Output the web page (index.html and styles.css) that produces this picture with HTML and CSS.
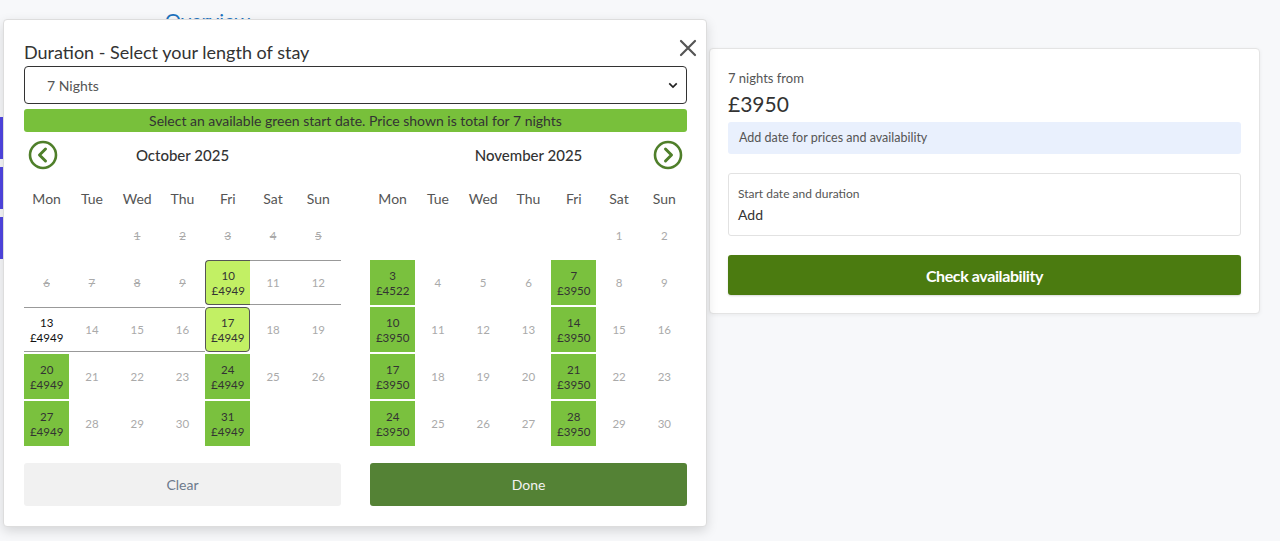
FILE: index.html
```html
<!DOCTYPE html>
<html lang="en">
<head>
    <meta charset="UTF-8">
    <meta name="viewport" content="width=device-width, initial-scale=1.0">
    <title>Holiday - Select dates</title>
    <link rel="stylesheet" href="styles.css">
</head>
<body>
    <div class="page">
        <section class="page-main">
            <nav class="tabs">
                <a href="#" class="tab-link">Overview</a>
            </nav>
            <div class="side-blocks">
                <div class="side-btn"></div>
                <div class="side-btn"></div>
                <div class="side-btn"></div>
            </div>
        </section>

        <aside class="booking-card">
            <div class="from-label">7 nights from</div>
            <div class="from-price">£3950</div>
            <div class="info-box">Add date for prices and availability</div>
            <div class="date-field">
                <div class="date-label">Start date and duration</div>
                <div class="date-value">Add</div>
            </div>
            <button class="check-btn">Check availability</button>
        </aside>
    </div>

    <div class="modal" role="dialog" aria-label="Select dates">
        <button class="close-btn" aria-label="Close">
            <svg viewBox="0 0 20 20" width="20" height="20">
                <path d="M3 3 L17 17 M17 3 L3 17" stroke="#555" stroke-width="2.2" stroke-linecap="round" fill="none"/>
            </svg>
        </button>
        <h2 class="modal-title">Duration - Select your length of stay</h2>
        <div class="select-box">
            <span>7 Nights</span>
            <svg class="select-chevron" viewBox="0 0 12 8" width="10" height="7">
                <path d="M1.5 1.5 L6 6 L10.5 1.5" stroke="#222" stroke-width="2" fill="none"/>
            </svg>
        </div>
        <div class="notice">Select an available green start date. Price shown is total for 7 nights</div>

        <div class="months">
            <div class="month">
                <div class="month-head">
                    <button class="nav-arrow" aria-label="Previous month">
                        <svg viewBox="0 0 30 30" width="30" height="30">
                            <circle cx="15" cy="15" r="13" stroke="#4f7f2a" stroke-width="2.6" fill="none"/>
                            <path d="M17.5 9 L11.5 15 L17.5 21" stroke="#4f7f2a" stroke-width="3" fill="none" stroke-linecap="round" stroke-linejoin="round"/>
                        </svg>
                    </button>
                    <div class="month-name">October 2025</div>
                    <div class="nav-spacer"></div>
                </div>
                <div class="weekdays"></div>
                <div class="grid" id="oct"></div>
            </div>
            <div class="month">
                <div class="month-head">
                    <div class="nav-spacer"></div>
                    <div class="month-name">November 2025</div>
                    <button class="nav-arrow" aria-label="Next month">
                        <svg viewBox="0 0 30 30" width="30" height="30">
                            <circle cx="15" cy="15" r="13" stroke="#4f7f2a" stroke-width="2.6" fill="none"/>
                            <path d="M12.5 9 L18.5 15 L12.5 21" stroke="#4f7f2a" stroke-width="3" fill="none" stroke-linecap="round" stroke-linejoin="round"/>
                        </svg>
                    </button>
                </div>
                <div class="weekdays"></div>
                <div class="grid" id="nov"></div>
            </div>
        </div>

        <div class="modal-actions">
            <button class="btn-clear">Clear</button>
            <button class="btn-done">Done</button>
        </div>
    </div>

    <script>
        const weekdays = ['Mon', 'Tue', 'Wed', 'Thu', 'Fri', 'Sat', 'Sun'];

        document.querySelectorAll('.weekdays').forEach(el => {
            el.innerHTML = weekdays.map(d => `<div class="wd">${d}</div>`).join('');
        });

        // offset = empty cells before the 1st, days = length of month
        function buildMonth(el, offset, days, info) {
            let html = '';
            for (let i = 0; i < offset; i++) {
                html += '<div class="day"></div>';
            }
            for (let d = 1; d <= days; d++) {
                const item = info[d] || {};
                let cls = 'day';
                if (item.type) cls += ' ' + item.type;
                if (item.range) cls += ' in-range';
                const price = item.price ? `<span>${item.price}</span>` : '';
                html += `<div class="${cls}"><span>${d}</span>${price}</div>`;
            }
            el.innerHTML = html;
        }

        const oct = {};
        for (let d = 1; d <= 9; d++) oct[d] = { type: 'past' };
        oct[10] = { type: 'picked start', price: '£4949', range: true };
        oct[11] = { range: true };
        oct[12] = { range: true };
        oct[13] = { type: 'priced', price: '£4949', range: true };
        oct[14] = { range: true };
        oct[15] = { range: true };
        oct[16] = { range: true };
        oct[17] = { type: 'picked end', price: '£4949', range: true };
        [20, 24, 27, 31].forEach(d => oct[d] = { type: 'avail', price: '£4949' });

        const nov = {};
        nov[3] = { type: 'avail', price: '£4522' };
        [7, 10, 14, 17, 21, 24, 28].forEach(d => nov[d] = { type: 'avail', price: '£3950' });

        buildMonth(document.getElementById('oct'), 2, 31, oct);
        buildMonth(document.getElementById('nov'), 5, 30, nov);
    </script>
</body>
</html>
```

FILE: styles.css
```css
* {
    margin: 0;
    padding: 0;
    box-sizing: border-box;
}

body {
    font-family: 'Lato', 'Open Sans', sans-serif;
    background-color: #F7F8FA;
    color: #333;
    min-height: 100vh;
}

button {
    font-family: inherit;
    border: none;
    cursor: pointer;
}

.page {
    display: grid;
    grid-template-columns: 1fr 551px;
    gap: 2px;
    padding-right: 20px;
    min-height: 541px;
}

.tabs {
    padding: 8px 0 0 165px;
    height: 117px;
}

.tab-link {
    color: #1E73BE;
    font-size: 20px;
    text-decoration: underline;
}

.side-blocks {
    display: flex;
    flex-direction: column;
    gap: 8px;
}

.side-btn {
    width: 160px;
    height: 42px;
    background: #5046E4;
}

.booking-card {
    margin-top: 48px;
    align-self: start;
    background: #fff;
    border: 1px solid #E4E4E4;
    border-radius: 4px;
    box-shadow: 0 1px 4px rgba(0,0,0,0.06);
    padding: 20px 18px 18px;
}

.from-label {
    font-size: 13px;
    color: #555;
    line-height: 18px;
}

.from-price {
    font-size: 21px;
    color: #333;
    margin-top: 4px;
    line-height: 26px;
}

.info-box {
    background: #E9F0FD;
    border-radius: 3px;
    font-size: 12.5px;
    color: #555;
    padding: 8px 11px;
    line-height: 16px;
    margin-top: 5px;
    height: 32px;
}

.date-field {
    margin-top: 19px;
    border: 1px solid #E2E2E2;
    border-radius: 3px;
    padding: 12px 9px 10px;
    height: 63px;
}

.date-label {
    font-size: 12px;
    color: #555;
    line-height: 16px;
}

.date-value {
    font-size: 14px;
    color: #333;
    margin-top: 4px;
    line-height: 18px;
}

.check-btn {
    display: block;
    width: 100%;
    margin-top: 19px;
    height: 40px;
    background: #4B7B10;
    color: #fff;
    font-size: 16px;
    font-weight: 700;
    letter-spacing: -0.4px;
    border-radius: 3px;
    box-shadow: 0 1px 2px rgba(0,0,0,0.15);
}

/* modal */
.modal {
    position: absolute;
    left: 3px;
    top: 19px;
    width: 704px;
    background: #fff;
    border: 1px solid #DDD;
    border-radius: 4px;
    box-shadow: 0 4px 12px rgba(0,0,0,0.14);
    padding: 21px 19px 20px 20px;
}

.close-btn {
    position: absolute;
    right: 5px;
    top: 15px;
    background: transparent;
    width: 26px;
    height: 26px;
    display: flex;
    align-items: center;
    justify-content: center;
}

.modal-title {
    font-size: 18px;
    font-weight: 400;
    color: #333;
    line-height: 22px;
}

.select-box {
    margin-top: 3px;
    height: 38px;
    border: 1px solid #333;
    border-radius: 4px;
    display: flex;
    align-items: center;
    justify-content: space-between;
    padding: 0 8px 0 22px;
    font-size: 14px;
    color: #555;
}

.notice {
    margin-top: 5px;
    height: 23px;
    background: #78C03B;
    border-radius: 3px;
    text-align: center;
    font-size: 14px;
    line-height: 23px;
    color: #333;
}

.months {
    display: flex;
    gap: 29px;
    margin-top: 8px;
}

.month {
    flex: 1;
}

.month-head {
    display: flex;
    align-items: center;
    justify-content: space-between;
    height: 30px;
    padding: 0 4px;
}

.nav-arrow {
    background: transparent;
    width: 30px;
    height: 30px;
    display: flex;
}

.nav-spacer {
    width: 30px;
}

.month-name {
    font-size: 15px;
    color: #333;
    font-weight: 500;
}

.weekdays,
.grid {
    display: grid;
    grid-template-columns: repeat(7, 1fr);
}

.weekdays {
    margin-top: 15px;
}

.wd {
    font-size: 14px;
    color: #555;
    text-align: center;
    height: 28px;
    line-height: 28px;
}

.grid {
    grid-auto-rows: 45px;
    row-gap: 2px;
}

.day {
    display: flex;
    flex-direction: column;
    align-items: center;
    justify-content: center;
    font-size: 11.5px;
    line-height: 15px;
    color: #AAA;
}

.day.past span:first-child {
    text-decoration: line-through;
}

.day.in-range {
    border-top: 1px solid #999;
    border-bottom: 1px solid #999;
}

.day.avail,
.day.priced {
    color: #333;
}

.day.priced {
    color: #111;
}

.day.avail {
    background: #7AC13E;
}

.day.picked {
    background: #C2F064;
    color: #333;
    border: 1px solid #555;
}

.day.start {
    border-right: none;
    border-radius: 4px 0 0 4px;
}

.day.end {
    border-radius: 4px;
}

.modal-actions {
    display: flex;
    gap: 29px;
    margin-top: 17px;
}

.modal-actions button {
    flex: 1;
    height: 43px;
    border-radius: 3px;
    font-size: 14px;
}

.btn-clear {
    background: #F1F1F1;
    color: #6D7A8C;
}

.btn-done {
    background: #548235;
    color: #F2F2F2;
}
```
